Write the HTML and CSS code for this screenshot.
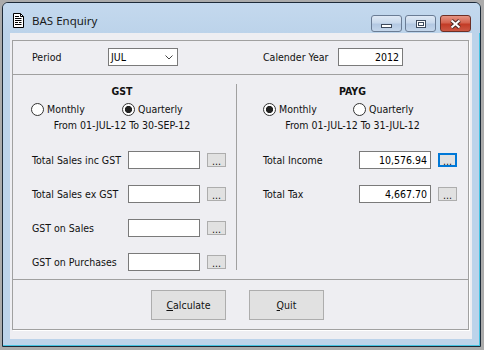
FILE: index.html
```html
<!DOCTYPE html>
<html>
<head>
<meta charset="utf-8">
<link rel="stylesheet" href="styles.css">
</head>
<body>
<div class="window">
  <div class="titlebar">
    <svg class="app-icon" width="11" height="15" viewBox="0 0 11 15">
      <path d="M0.5 0.5H7.5L10.5 3.5V14.5H0.5Z" fill="#fff" stroke="#000"/>
      <path d="M7.5 0.5V3.5H10.5" fill="none" stroke="#000"/>
      <path d="M2 3.5H6M2 5.5H8.5M2 7.5H8.5M2 9.5H5M6 9.5H8.5M2 11.5H8.5" stroke="#000"/>
    </svg>
    <span class="title">BAS Enquiry</span>
    <div class="controls">
      <span class="cbtn"><span class="g-min"></span></span>
      <span class="cbtn"><span class="g-max"></span></span>
      <span class="cbtn close">
        <svg width="13" height="10" viewBox="0 0 13 10">
          <path d="M2.5 1.5L10.5 8.5M10.5 1.5L2.5 8.5" stroke="#4a2a25" stroke-width="4"/>
          <path d="M2.5 1.5L10.5 8.5M10.5 1.5L2.5 8.5" stroke="#fff" stroke-width="2"/>
        </svg>
      </span>
    </div>
  </div>
  <div class="client">
    <div class="group">
      <div class="top">
        <span class="lbl-period">Period</span>
        <div class="select">
          <span>JUL</span>
          <svg width="8" height="5" viewBox="0 0 8 5"><path d="M0.5 0.5L4 4L7.5 0.5" fill="none" stroke="#444"/></svg>
        </div>
        <span class="lbl-year">Calender Year</span>
        <div class="input year">2012</div>
      </div>
      <div class="middle">
        <div class="col left">
          <div class="head">GST</div>
          <div class="radios">
            <span class="radio"><span class="rb"></span>Monthly</span>
            <span class="radio"><span class="rb on"></span>Quarterly</span>
          </div>
          <div class="from">From 01-JUL-12 To 30-SEP-12</div>
          <div class="fields">
            <div class="field"><span class="flabel">Total Sales inc GST</span><div class="input"></div><span class="dots">...</span></div>
            <div class="field"><span class="flabel">Total Sales ex GST</span><div class="input"></div><span class="dots">...</span></div>
            <div class="field"><span class="flabel">GST on Sales</span><div class="input"></div><span class="dots">...</span></div>
            <div class="field"><span class="flabel">GST on Purchases</span><div class="input"></div><span class="dots">...</span></div>
          </div>
        </div>
        <div class="divider"></div>
        <div class="col right">
          <div class="head">PAYG</div>
          <div class="radios">
            <span class="radio"><span class="rb on"></span>Monthly</span>
            <span class="radio"><span class="rb"></span>Quarterly</span>
          </div>
          <div class="from">From 01-JUL-12 To 31-JUL-12</div>
          <div class="fields">
            <div class="field"><span class="flabel">Total Income</span><div class="input">10,576.94</div><span class="dots focus">...</span></div>
            <div class="field"><span class="flabel">Total Tax</span><div class="input">4,667.70</div><span class="dots">...</span></div>
          </div>
        </div>
      </div>
      <div class="actions">
        <span class="btn"><u>C</u>alculate</span>
        <span class="btn"><u>Q</u>uit</span>
      </div>
    </div>
  </div>
</div>
</body>
</html>
```
FILE: styles.css
```css
* { box-sizing: border-box; }
html, body { margin: 0; padding: 0; }
body {
  width: 484px;
  height: 350px;
  overflow: hidden;
  background: #ababab;
  font-family: "DejaVu Sans Condensed", "DejaVu Sans", sans-serif;
  font-size: 10.5px;
  color: #111;
}
.window {
  margin: 2px 0 0 2px;
  width: 479px;
  height: 345px;
  border: 1px solid #1d2a38;
  border-radius: 6px 6px 0 0;
  background: #bcd3ea;
  box-shadow: inset -1px -1px 0 #45c3e2;
  display: flex;
  flex-direction: column;
}
.titlebar {
  height: 30px;
  display: flex;
  align-items: center;
  padding: 4px 9px 0 10px;
  background: linear-gradient(#c4d9ee, #bcd3ea);
  border-radius: 5px 5px 0 0;
}
.app-icon { flex: none; margin-right: 8px; }
.title {
  font-family: "Noto Sans", "Open Sans", sans-serif;
  font-size: 11.5px;
  color: #1a1a1a;
  padding-top: 1px;
}
.controls {
  margin-left: auto;
  align-self: flex-start;
  margin-top: 8px;
  display: flex;
  gap: 3px;
}
.cbtn {
  width: 31px;
  height: 17px;
  border: 1px solid #6a7c94;
  border-radius: 3px;
  background: linear-gradient(#dfe9f5 0%, #c9d9ec 45%, #b3c8e2 55%, #c4d6eb 100%);
  display: flex;
  align-items: center;
  justify-content: center;
}
.cbtn.close {
  margin-left: 1px;
  border-color: #6e2f25;
  background: linear-gradient(#e69483 0%, #d4634f 45%, #c23b26 55%, #cc5743 100%);
}
.g-min {
  width: 11px;
  height: 4px;
  margin-top: 5px;
  border: 1px solid #3d4a5c;
  background: #fff;
}
.g-max {
  width: 10px;
  height: 8px;
  border: 1px solid #3d4a5c;
  background: #fff;
  box-shadow: inset 0 0 0 1px #fff, inset 0 0 0 2px #3d4a5c;
}
.client {
  margin: 0 8px 0 7px;
  height: 306px;
  background: #eeeef2;
  padding: 7px 3px 0 2px;
}
.group {
  height: 290px;
  border: 1px solid #a0a0a0;
  box-shadow: 1px 1px 0 #fff;
  display: flex;
  flex-direction: column;
}
.top {
  height: 34px;
  flex: none;
  display: flex;
  align-items: center;
  padding-left: 19px;
  padding-bottom: 1px;
  border-bottom: 1px solid #a0a0a0;
}
.lbl-period { width: 76px; }
.select {
  width: 70px;
  height: 18px;
  border: 1px solid #7a7a7a;
  background: #fff;
  display: flex;
  align-items: center;
  justify-content: space-between;
  padding: 0 4px 0 2px;
  color: #000;
}
.lbl-year { margin-left: 85px; width: 75px; }
.input {
  width: 72px;
  height: 18px;
  border: 1px solid #7a7a7a;
  background: #fff;
  text-align: right;
  padding-right: 3px;
  line-height: 16px;
  color: #000;
}
.input.year { width: 65px; }
.middle {
  height: 205px;
  flex: none;
  display: flex;
  border-bottom: 1px solid #a0a0a0;
}
.col { padding-top: 10px; }
.col.left { width: 223px; }
.col.right { flex: 1; }
.divider {
  width: 1px;
  height: 186px;
  margin-top: 9px;
  background: #a0a0a0;
}
.head {
  text-align: center;
  font-weight: bold;
  line-height: 13px;
}
.left .head, .left .from { padding-right: 5px; }
.radios {
  display: flex;
  height: 14px;
  margin-top: 4px;
  padding-left: 18px;
}
.right .radios { padding-left: 26px; }
.radio {
  width: 91px;
  display: flex;
  align-items: center;
  gap: 3px;
}
.right .radio { width: 90px; }
.rb {
  width: 13px;
  height: 13px;
  border-radius: 50%;
  border: 1px solid #333;
  background: #fff;
}
.rb.on { background: radial-gradient(circle, #222 0 3.3px, #fff 3.9px); }
.from {
  text-align: center;
  line-height: 13px;
  margin-top: 3px;
}
.fields {
  margin-top: 19px;
  display: flex;
  flex-direction: column;
  gap: 16px;
  padding-left: 19px;
}
.right .fields { padding-left: 26px; }
.field {
  display: flex;
  align-items: center;
  height: 18px;
}
.flabel { width: 96px; }
.dots {
  margin-left: 7px;
  width: 19px;
  height: 14px;
  border: 1px solid #adadad;
  background: #e1e1e1;
  text-align: center;
  line-height: 12px;
  padding-top: 1px;
  font-size: 10.5px;
}
.dots.focus {
  border-color: #0078d7;
  box-shadow: inset 0 0 0 1px #0078d7;
}
.actions {
  flex: 1;
  display: flex;
  align-items: center;
  justify-content: center;
  gap: 23px;
  padding-right: 6px;
}
.btn {
  width: 75px;
  height: 30px;
  border: 1px solid #adadad;
  background: #e1e1e1;
  display: flex;
  align-items: center;
  justify-content: center;
}
.btn u { text-decoration-thickness: 1px; text-underline-offset: 1px; }
```
